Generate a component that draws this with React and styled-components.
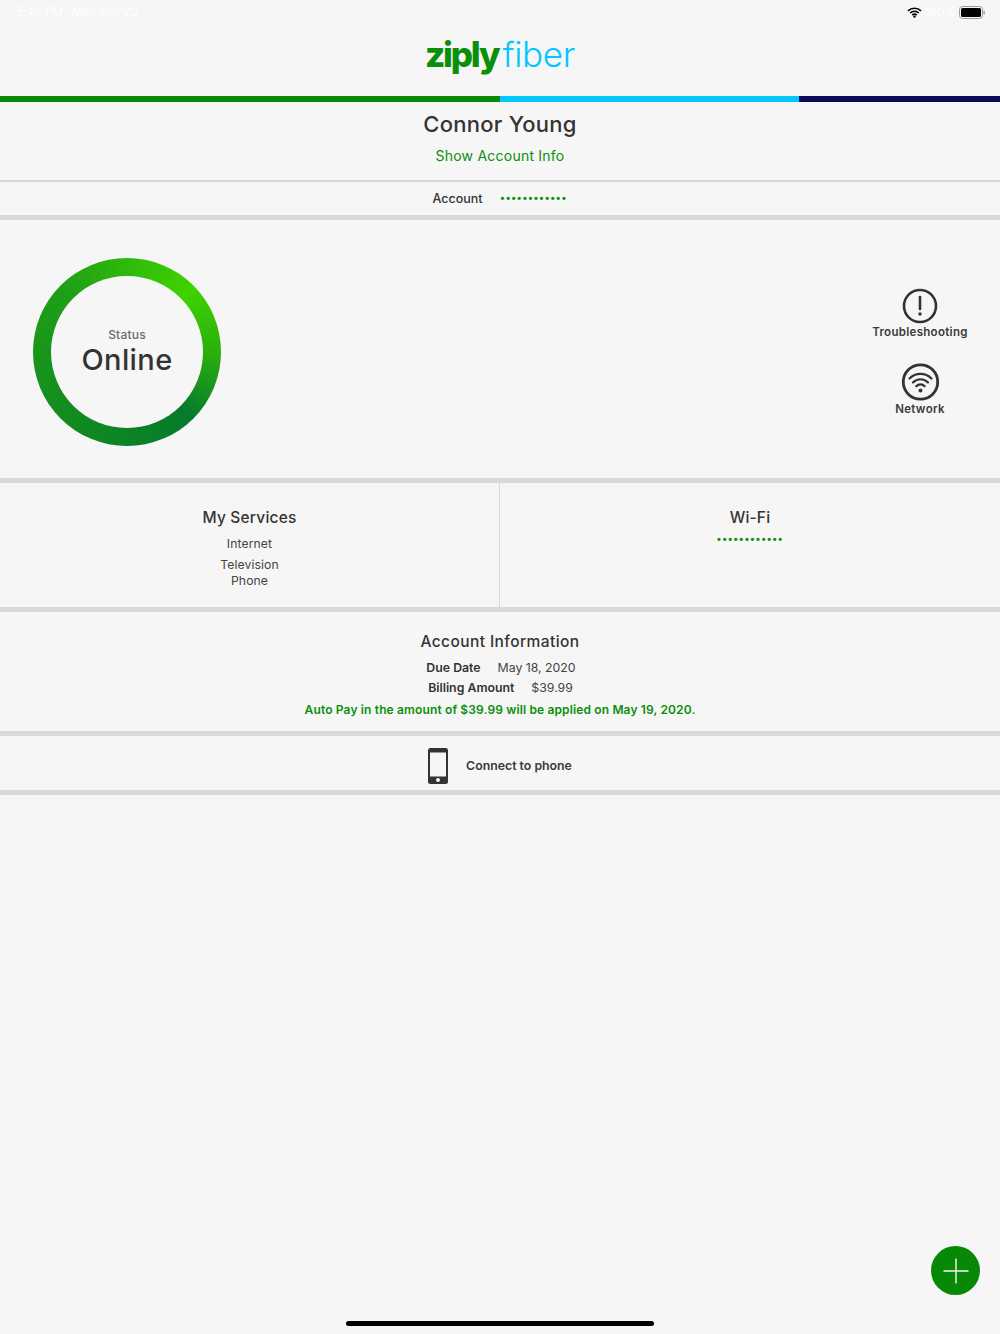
import React from "react";
import styled, { createGlobalStyle } from "styled-components";

const Global = createGlobalStyle`
  html, body { margin: 0; padding: 0; background: #f6f6f6; }
  body { font-family: "Inter", "Liberation Sans", sans-serif; color: #333; }
`;
const Page = styled.div`
  position: relative; width: 1000px; height: 1334px; background: #f6f6f6; overflow: hidden;
`;
const StatusBar = styled.div`
  height: 24px; padding: 0 15px 0 16px; display: flex; align-items: center; justify-content: space-between;
  font-size: 11.5px; color: #fff; letter-spacing: .2px;
`;
const StatusGroup = styled.div`display: flex; align-items: center; gap: ${p => p.$gap || 0}px;`;
const Logo = styled.div`
  height: 72px; display: flex; justify-content: center; align-items: flex-start; padding-top: 5px; box-sizing: border-box;
  font-size: 35px; line-height: 50px;
`;
const Ziply = styled.span`color: #0a8f0a; font-weight: 800; letter-spacing: -2.2px;`;
const Fiber = styled.span`color: #00c8ff; font-weight: 300; margin-left: 4px; letter-spacing: -.3px;`;
const ColorBar = styled.div`height: 6px; display: grid; grid-template-columns: 500px 299px 201px;`;
const Stripe = styled.div`background: ${p => p.$c};`;
const Rule = styled.div`height: ${p => p.$h || 5}px; background: #d8d8d8;`;
const NameBlock = styled.div`height: 78px; text-align: center; box-sizing: border-box; padding-top: 8px;`;
const Name = styled.div`font-size: 22px; line-height: 28px; font-weight: 500; letter-spacing: .25px; color: #333;`;
const ShowLink = styled.div`font-size: 14px; line-height: 20px; margin-top: 8px; color: #0a8f0a; letter-spacing: .22px;`;
const AccountRow = styled.div`height: 33px; display: flex; justify-content: center; align-items: center; gap: 18px; font-size: 12.5px; font-weight: 500; padding-bottom: 1px; box-sizing: border-box;`;
const Dots = styled.span`color: #0a8f0a; font-size: 11px; letter-spacing: 1.72px; font-family: "Liberation Sans", sans-serif; font-weight: 700; line-height: 12px;`;
const StatusSection = styled.div`height: 258px; display: flex; justify-content: space-between; padding: 38px 30px 0 33px; box-sizing: border-box;`;
const Ring = styled.div`
  width: 188px; height: 188px; border-radius: 50%; display: flex; align-items: center; justify-content: center;
  background: conic-gradient(from 45deg, #3fd300 0deg, #2bb00c 45deg, #067a2c 90deg, #118a20 170deg, #1f9f16 270deg, #3fd300 360deg);
`;
const RingInner = styled.div`
  width: 152px; height: 152px; border-radius: 50%; background: #f6f6f6; display: flex; flex-direction: column; align-items: center; justify-content: center; padding-top: 1px; box-sizing: border-box;
`;
const StatusLabel = styled.div`font-size: 12px; line-height: 14px; color: #6f6a6a; font-weight: 500; letter-spacing: .2px;`;
const StatusValue = styled.div`font-size: 29px; line-height: 35px; font-weight: 500; color: #333; letter-spacing: .4px;`;
const Tools = styled.div`width: 100px; display: flex; flex-direction: column; align-items: center; padding-top: 30px;`;
const Tool = styled.div`display: flex; flex-direction: column; align-items: center; margin-bottom: ${p => p.$mb || 0}px;`;
const ToolLabel = styled.div`font-size: 11.5px; line-height: 14px; font-weight: 600; color: #3a3a3a; letter-spacing: .3px; margin-top: ${p => p.$mt}px; white-space: nowrap;`;
const Columns = styled.div`height: 124px; display: grid; grid-template-columns: 500px 500px;`;
const Col = styled.div`text-align: center; padding-top: 25px; box-sizing: border-box; ${p => p.$border ? "border-right: 1px solid #d8d8d8;" : ""}`;
const ColTitle = styled.div`font-size: 15.5px; line-height: 20px; font-weight: 500; color: #333; letter-spacing: .2px;`;
const ColList = styled.div`font-size: 12.2px; line-height: 16px; color: #444; margin-top: 8px; letter-spacing: .1px;`;
const ColItem = styled.div`margin-top: ${p => p.$mt || 0}px;`;
const WifiDots = styled(Dots)`display: block; margin-top: 5px; padding-left: 1px;`;
const Info = styled.div`height: 119px; text-align: center; padding-top: 20px; box-sizing: border-box;`;
const InfoTitle = styled.div`font-size: 15.5px; line-height: 20px; font-weight: 500; letter-spacing: .42px; color: #333;`;
const InfoRow = styled.div`display: flex; justify-content: center; gap: ${p => p.$gap}px; font-size: 12.3px; line-height: 20px; margin-top: ${p => p.$mt}px; color: #444; padding-left: ${p => p.$pl || 0}px;`;
const InfoKey = styled.span`font-weight: 600; color: #333;`;
const AutoPay = styled.div`font-size: 12px; line-height: 16px; font-weight: 600; color: #0a8f0a; margin-top: 4px; letter-spacing: .14px;`;
const Connect = styled.div`height: 54px; display: flex; justify-content: center; align-items: center; gap: 18px; font-size: 12.3px; font-weight: 600; color: #3a3a3a; padding-top: 5px; box-sizing: border-box;`;
const Fab = styled.div`
  position: absolute; left: 931px; top: 1246px; width: 49px; height: 49px; border-radius: 50%; background: #078907;
  display: flex; align-items: center; justify-content: center;
`;
const HomeBar = styled.div`position: absolute; left: 346px; top: 1321px; width: 308px; height: 5px; border-radius: 3px; background: #000;`;

export default function App() {
  return (
    <Page>
      <Global />
      <StatusBar>
        <StatusGroup $gap={9}><span>5:42 PM</span><span>Mon Apr 20</span></StatusGroup>
        <StatusGroup $gap={3}>
          <svg width="15" height="11" viewBox="0 0 15 11">
            <path d="M1 3.8a9.4 9.4 0 0 1 13 0M3.2 6a6.2 6.2 0 0 1 8.6 0M5.3 8.1a3.2 3.2 0 0 1 4.4 0" fill="none" stroke="#000" strokeWidth="1.6" />
            <circle cx="7.5" cy="9.6" r="1.2" fill="#000" />
          </svg>
          <span>100%</span>
          <svg width="26" height="13" viewBox="0 0 26 13">
            <rect x=".5" y=".5" width="23" height="12" rx="3" fill="none" stroke="#999" />
            <rect x="2" y="2" width="20" height="9" rx="1.6" fill="#000" />
            <rect x="24.5" y="4.5" width="1.3" height="4" rx=".6" fill="#999" />
          </svg>
        </StatusGroup>
      </StatusBar>
      <Logo><Ziply>ziply</Ziply><Fiber>fiber</Fiber></Logo>
      <ColorBar><Stripe $c="#078907" /><Stripe $c="#00c8ff" /><Stripe $c="#0a0a55" /></ColorBar>
      <NameBlock>
        <Name>Connor Young</Name>
        <ShowLink>Show Account Info</ShowLink>
      </NameBlock>
      <Rule $h={2} />
      <AccountRow><span>Account</span><Dots>••••••••••••</Dots></AccountRow>
      <Rule />
      <StatusSection>
        <Ring>
          <RingInner>
            <StatusLabel>Status</StatusLabel>
            <StatusValue>Online</StatusValue>
          </RingInner>
        </Ring>
        <Tools>
          <Tool $mb={24}>
            <svg width="36" height="36" viewBox="0 0 36 36">
              <circle cx="18" cy="18" r="16" fill="none" stroke="#333" strokeWidth="2.6" />
              <path d="M18 9v12" stroke="#333" strokeWidth="2.6" strokeLinecap="round" />
              <circle cx="18" cy="26" r="1.7" fill="#333" />
            </svg>
            <ToolLabel $mt={1}>Troubleshooting</ToolLabel>
          </Tool>
          <Tool>
            <svg width="39" height="38" viewBox="0 0 39 38">
              <circle cx="19.5" cy="19" r="17.2" fill="none" stroke="#333" strokeWidth="2.8" />
              <path d="M8.5 15.5a15.5 15.5 0 0 1 22 0M12 19.5a10.3 10.3 0 0 1 15 0M15.3 23.2a5.6 5.6 0 0 1 8.4 0" fill="none" stroke="#333" strokeWidth="2.2" strokeLinecap="round" />
              <circle cx="19.5" cy="27.5" r="2" fill="#333" />
            </svg>
            <ToolLabel $mt={1}>Network</ToolLabel>
          </Tool>
        </Tools>
      </StatusSection>
      <Rule />
      <Columns>
        <Col $border>
          <ColTitle>My Services</ColTitle>
          <ColList>
            <ColItem>Internet</ColItem>
            <ColItem $mt={5}>Television</ColItem>
            <ColItem>Phone</ColItem>
          </ColList>
        </Col>
        <Col>
          <ColTitle>Wi-Fi</ColTitle>
          <WifiDots>••••••••••••</WifiDots>
        </Col>
      </Columns>
      <Rule />
      <Info>
        <InfoTitle>Account Information</InfoTitle>
        <InfoRow $mt={6} $gap={17} $pl={2}><InfoKey>Due Date</InfoKey><span>May 18, 2020</span></InfoRow>
        <InfoRow $mt={0} $gap={17} $pl={1}><InfoKey>Billing Amount</InfoKey><span>$39.99</span></InfoRow>
        <AutoPay>Auto Pay in the amount of $39.99 will be applied on May 19, 2020.</AutoPay>
      </Info>
      <Rule />
      <Connect>
        <svg width="20" height="36" viewBox="0 0 20 36">
          <rect width="20" height="36" rx="2.5" fill="#333" />
          <rect x="2" y="4.5" width="16" height="24" fill="#f6f6f6" />
          <circle cx="10" cy="32" r="2" fill="#f6f6f6" />
        </svg>
        <span>Connect to phone</span>
      </Connect>
      <Rule />
      <Fab>
        <svg width="26" height="26" viewBox="0 0 26 26">
          <path d="M13 .5v25M.5 13h25" stroke="#f6f6f6" strokeWidth="1.4" />
        </svg>
      </Fab>
      <HomeBar />
    </Page>
  );
}
